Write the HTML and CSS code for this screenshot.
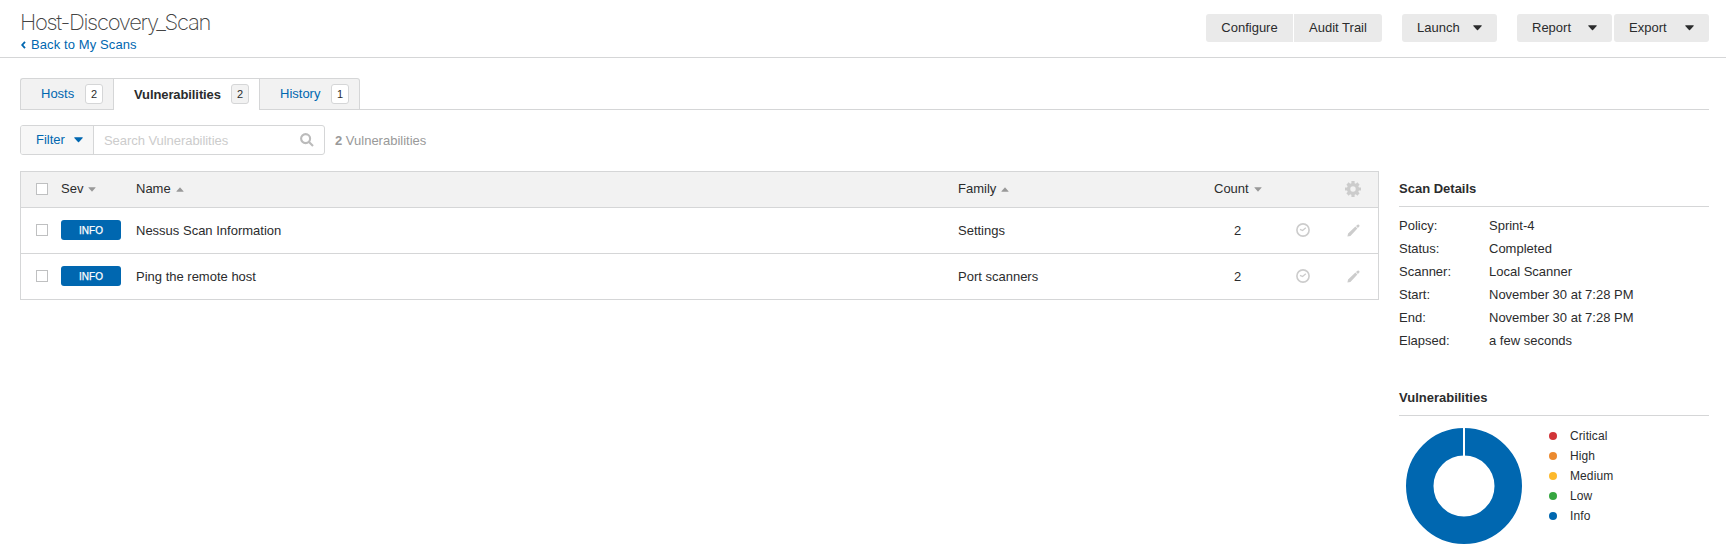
FILE: index.html
```html
<!DOCTYPE html>
<html lang="en">
<head>
<meta charset="utf-8">
<title>Host-Discovery_Scan</title>
<link rel="stylesheet" href="styles.css">
</head>
<body>
<svg class="defs" aria-hidden="true">
  <symbol id="caret" viewBox="0 0 9 6"><path d="M0.6 0.3H8.4Q9 0.3 8.7 0.9L5 5.1Q4.5 5.6 4 5.1L0.3 0.9Q0 0.3 0.6 0.3Z"/></symbol>
  <symbol id="clock" viewBox="0 0 14 14"><circle cx="7" cy="7" r="6.1" fill="none" stroke="currentColor" stroke-width="1.6"/><path d="M4 6.3L6.6 7.5L9.8 4.8" fill="none" stroke="currentColor" stroke-width="1.3"/></symbol>
  <symbol id="pencil" viewBox="0 0 13 13"><path d="M0.4 12.6L1.1 9.5L8.4 2.6L10.4 4.6L3.4 11.9Z M9 2.1L10.5 0.7Q11.3 0.1 12 0.8L12.2 1Q12.9 1.8 12.3 2.5L10.9 4Z"/></symbol>
  <symbol id="gear" viewBox="-8 -8 16 16">
    <g stroke="currentColor" stroke-width="3.2"><path d="M0 -8V-4M0 8V4M-8 0H-4M8 0H4M-5.5 -5.5L-3 -3M5.5 5.5L3 3M-5.5 5.5L-3 3M5.5 -5.5L3 -3"/></g>
    <circle r="4.4" fill="none" stroke="currentColor" stroke-width="3.4"/>
  </symbol>
</svg>

<header class="page-header">
  <div class="heading">
    <h1>Host-Discovery_Scan</h1>
    <a class="back"><svg class="chevron" viewBox="0 0 5 8"><path d="M4 0.8L1.2 4L4 7.2"/></svg>Back to My Scans</a>
  </div>
  <div class="actions">
    <div class="group joined"><button class="btn left">Configure</button><button class="btn right">Audit Trail</button></div>
    <div class="group"><button class="btn menu">Launch<svg class="caret"><use href="#caret"/></svg></button></div>
    <div class="group"><button class="btn menu">Report<svg class="caret"><use href="#caret"/></svg></button><button class="btn menu">Export<svg class="caret"><use href="#caret"/></svg></button></div>
  </div>
</header>

<main>
  <nav class="tabs">
    <a class="tab first">Hosts<span class="badge">2</span></a>
    <a class="tab active">Vulnerabilities<span class="badge">2</span></a>
    <a class="tab last">History<span class="badge">1</span></a>
  </nav>

  <div class="toolbar">
    <div class="search">
      <button class="filter">Filter<svg class="caret"><use href="#caret"/></svg></button>
      <div class="field"><span>Search Vulnerabilities</span>
        <svg class="lens" viewBox="0 0 14 14"><circle cx="5.6" cy="5.6" r="4.5"/><path d="M9 9L13 13"/></svg>
      </div>
    </div>
    <p class="total"><b>2</b> Vulnerabilities</p>
  </div>

  <div class="content">
    <section class="table">
      <div class="row head">
        <i class="check"></i><span>Sev<svg class="sort"><use href="#caret"/></svg></span><span>Name<svg class="sort up"><use href="#caret"/></svg></span><span>Family<svg class="sort up"><use href="#caret"/></svg></span><span class="count">Count<svg class="sort"><use href="#caret"/></svg></span><span></span><svg class="gear"><use href="#gear"/></svg>
      </div>
      <div class="row">
        <i class="check"></i><span class="sev">INFO</span><span class="cell">Nessus Scan Information</span><span class="cell">Settings</span><span class="cell num">2</span><svg class="clock"><use href="#clock"/></svg><svg class="pencil"><use href="#pencil"/></svg>
      </div>
      <div class="row">
        <i class="check"></i><span class="sev">INFO</span><span class="cell">Ping the remote host</span><span class="cell">Port scanners</span><span class="cell num">2</span><svg class="clock"><use href="#clock"/></svg><svg class="pencil"><use href="#pencil"/></svg>
      </div>
    </section>

    <aside>
      <h2>Scan Details</h2>
      <dl>
        <dt>Policy:</dt><dd>Sprint-4</dd>
        <dt>Status:</dt><dd>Completed</dd>
        <dt>Scanner:</dt><dd>Local Scanner</dd>
        <dt>Start:</dt><dd>November 30 at 7:28 PM</dd>
        <dt>End:</dt><dd>November 30 at 7:28 PM</dd>
        <dt>Elapsed:</dt><dd>a few seconds</dd>
      </dl>
      <h2>Vulnerabilities</h2>
      <div class="chart">
        <svg class="donut" viewBox="0 0 116 116"><circle cx="58" cy="58" r="44.25"/><path d="M58 0V28"/></svg>
        <ul>
          <li class="critical">Critical</li>
          <li class="high">High</li>
          <li class="medium">Medium</li>
          <li class="low">Low</li>
          <li class="info">Info</li>
        </ul>
      </div>
    </aside>
  </div>
</main>
</body>
</html>
```

FILE: styles.css
```css
* { box-sizing: border-box; }
body {
  margin: 0;
  background: #fff;
  color: #2b2c2d;
  font: 13px/20px "Liberation Sans", Arial, sans-serif;
}
h1, h2, p, dl, dd, ul { margin: 0; padding: 0; }
svg { display: block; flex: none; fill: currentColor; }
.defs { width: 0; height: 0; position: absolute; }
button { font: inherit; color: inherit; border: 0; padding: 0; margin: 0; }

.page-header {
  display: flex;
  justify-content: space-between;
  height: 58px;
  padding: 0 17px 0 20px;
  border-bottom: 1px solid #d5d6d7;
}
.heading { padding-top: 10px; }
h1 {
  font: 200 22px/25px Inter, Roboto, sans-serif;
  letter-spacing: -1.3px;
  color: #444;
}
.back { display: flex; align-items: center; color: #0067b0; letter-spacing: 0.1px; }
.chevron { width: 5px; height: 8px; margin: 0 5px 0 1px; fill: none; stroke: #0067b0; stroke-width: 1.8; }
.actions { display: flex; gap: 20px; padding-top: 14px; }
.group { display: flex; gap: 2px; }
.joined { gap: 1px; }
.btn {
  width: 95px;
  height: 28px;
  background: #eaeaea;
  border-radius: 3px;
  line-height: 28px;
}
.btn.left { width: 87px; border-radius: 3px 0 0 3px; }
.btn.right { width: 88px; border-radius: 0 3px 3px 0; }
.btn.menu { display: flex; align-items: center; justify-content: space-between; padding: 0 15px; }
.caret { width: 9px; height: 6px; }

main { padding: 20px 17px 0 20px; }
.tabs { display: flex; height: 32px; border-bottom: 1px solid #d5d6d7; }
.tab {
  display: flex;
  align-items: center;
  justify-content: space-between;
  height: 32px;
  padding: 0 10px 0 20px;
  background: #f2f2f2;
  border: 1px solid #d5d6d7;
  color: #0067b0;
}
.tab.first { width: 93px; border-right: 0; border-radius: 3px 0 0 0; }
.tab.last { width: 100px; border-left: 0; border-radius: 0 3px 0 0; }
.tab.active { width: 147px; background: #fff; border-bottom: 0; color: #2b2c2d; font-weight: bold; letter-spacing: -0.1px; }
.badge {
  width: 18px;
  height: 20px;
  border: 1px solid #d5d6d7;
  border-radius: 3px;
  background: #fff;
  color: #2b2c2d;
  font: 11px/18px "Liberation Sans", Arial, sans-serif;
  letter-spacing: 0;
  text-align: center;
}
.active .badge { background: #f2f2f2; margin-bottom: 1px; }

.toolbar { display: flex; align-items: center; gap: 10px; margin-top: 15px; }
.search { display: flex; width: 305px; height: 30px; border: 1px solid #d5d6d7; border-radius: 3px; overflow: hidden; }
.filter {
  display: flex;
  align-items: center;
  gap: 9px;
  width: 72px;
  padding-left: 15px;
  background: #f7f7f7;
  color: #0067b0;
}
.field {
  flex: 1;
  display: flex;
  align-items: center;
  justify-content: space-between;
  padding: 0 10px;
  border-left: 1px solid #d5d6d7;
  color: #ccc;
}
.field span { padding-top: 1px; letter-spacing: -0.05px; }
.lens { width: 14px; height: 14px; fill: none; stroke: #bbb; stroke-width: 2.1; }
.total { color: #999; padding-top: 2px; }

.content { display: flex; justify-content: space-between; margin-top: 16px; }
.table { width: 1359px; height: 129px; border: 1px solid #d5d6d7; }
.row {
  display: grid;
  grid-template-columns: 25px 75px 822px 256px 75px 50px 38px;
  align-items: center;
  height: 46px;
  padding: 0 0 1px 15px;
  border-bottom: 1px solid #d5d6d7;
}
.row:last-child { height: 45px; border-bottom: 0; }
.head { height: 36px; background: #f2f2f2; }
.head span { display: flex; align-items: center; }
.cell { padding-top: 2px; }
.check { width: 12px; height: 12px; border: 1px solid #bfc0c1; background: #fff; }
.sort { width: 8px; height: 5px; margin: 1px 0 0 5px; color: #999; }
.up { transform: rotate(180deg); }
.sev {
  width: 60px;
  height: 20px;
  border-radius: 3px;
  background: #0067b0;
  color: #fff;
  font-size: 10px;
  line-height: 21px;
  text-align: center;
  -webkit-text-stroke: 0.25px #fff;
}
.num { padding-left: 20px; }
.clock { width: 14px; height: 14px; color: #ccc; margin-left: 7px; }
.pencil { width: 13px; height: 13px; color: #ccc; margin-left: 8px; }
.gear { width: 16px; height: 16px; color: #ccc; margin-left: 6px; }

aside { width: 310px; }
h2 { height: 36px; border-bottom: 1px solid #d5d6d7; font: bold 13px/36px "Liberation Sans", Arial, sans-serif; }
dl { display: grid; grid-template-columns: 90px 1fr; align-content: start; padding-top: 7px; line-height: 23px; height: 173px; }
.chart { display: flex; padding: 12px 0 0 7px; }
.donut { width: 116px; height: 116px; }
.donut circle { fill: none; stroke: #0067b0; stroke-width: 27.5; }
.donut path { stroke: #fff; stroke-width: 2; }
ul { list-style: none; font-size: 12px; letter-spacing: 0.1px; margin-left: 27px; margin-top: -2px; }
li { display: flex; align-items: center; height: 20px; }
li::before { content: ""; width: 8px; height: 8px; border-radius: 50%; margin-right: 13px; }
.critical::before { background: #d13438; }
.high::before { background: #eb8a2f; }
.medium::before { background: #fdb92c; }
.low::before { background: #36a640; }
.info::before { background: #0067b0; }
```
